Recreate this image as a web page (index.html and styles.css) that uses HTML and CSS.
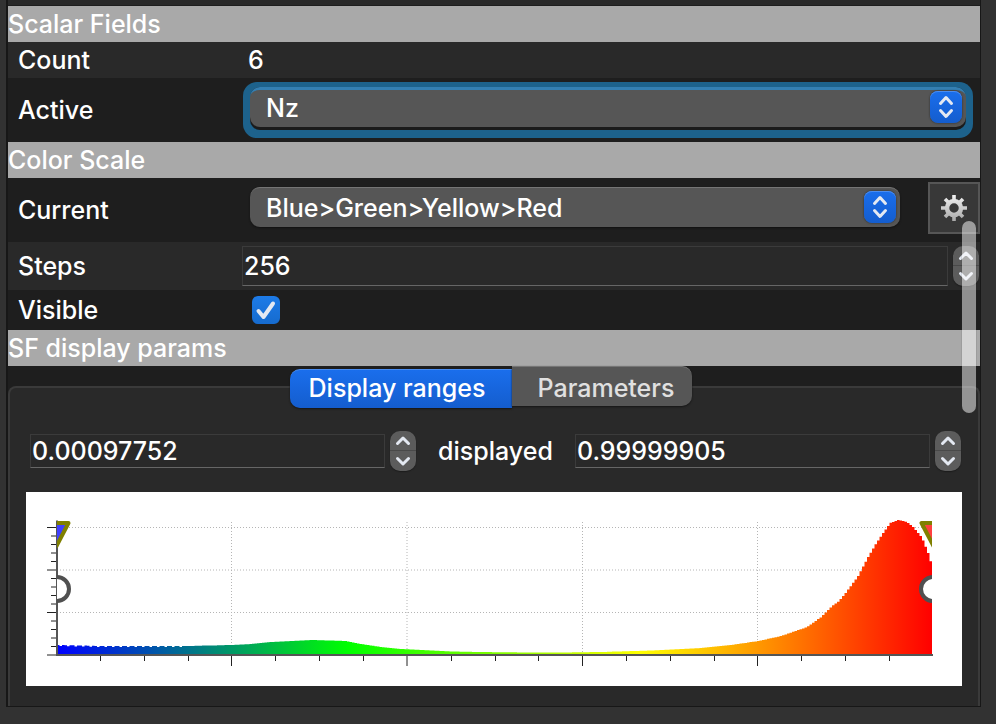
FILE: index.html
```html
<!DOCTYPE html>
<html lang="en">
<head>
<meta charset="utf-8">
<title>Properties</title>
<link rel="stylesheet" href="styles.css">
</head>
<body>
<svg class="defs" aria-hidden="true">
  <symbol id="updown" viewBox="0 0 32 32">
    <path d="M10.500 12.500L16 6.500l5.500 6M10.500 19.500L16 25.500l5.500-6"/>
  </symbol>
  <symbol id="up" viewBox="0 0 26 20">
    <path d="M7.500 12.500L13 7l5.500 5.500"/>
  </symbol>
  <symbol id="down" viewBox="0 0 26 20">
    <path d="M7.500 7.500L13 13l5.500-5.500"/>
  </symbol>
</svg>
<main class="panel">
  <h2 class="section">Scalar Fields</h2>
  <div class="row row-short alt">
    <span class="name">Count</span>
    <div class="value"><span class="text">6</span></div>
  </div>
  <div class="row row-tall">
    <label class="name" for="active">Active</label>
    <div class="value">
      <div class="ring"><div class="ring-inner"><div class="combo">
        <select id="active"><option>Nz</option></select>
        <svg class="badge"><use href="#updown"/></svg>
      </div></div></div>
    </div>
  </div>
  <h2 class="section">Color Scale</h2>
  <div class="row row-tall">
    <label class="name" for="current">Current</label>
    <div class="value scale">
      <div class="combo">
        <select id="current"><option>Blue&gt;Green&gt;Yellow&gt;Red</option></select>
        <svg class="badge"><use href="#updown"/></svg>
      </div>
      <button class="gear" type="button" aria-label="Edit color scale">
        <svg viewBox="0 0 26 26">
          <defs><linearGradient id="metal" gradientUnits="userSpaceOnUse" x1="0" y1="0" x2="0" y2="26"><stop offset="0" stop-color="#f2f2f2"/><stop offset="1" stop-color="#a8a8a8"/></linearGradient></defs>
          <g fill="none" stroke="url(#metal)">
            <circle cx="13" cy="13" r="7" stroke-width="4.500"/>
            <path stroke-width="3.600" d="M13 0l.01 5M13 21l.01 5M0 13l5 .01M21 13l5 .01M4 4l3.500 3.500M18.500 18.500L22 22M22 4l-3.500 3.500M7.500 18.500L4 22"/>
          </g>
        </svg>
      </button>
    </div>
  </div>
  <div class="row row-mid alt">
    <label class="name" for="steps">Steps</label>
    <div class="value spin">
      <input class="field field-tall" id="steps" type="text" value="256">
      <div class="stepper">
        <button type="button" aria-label="Increase steps"><svg><use href="#up"/></svg></button>
        <button type="button" aria-label="Decrease steps"><svg><use href="#down"/></svg></button>
      </div>
    </div>
  </div>
  <div class="row row-check">
    <label class="name" for="visible">Visible</label>
    <div class="value check">
      <input id="visible" type="checkbox" checked>
      <svg class="tick" viewBox="0 0 28 28"><path d="M6.500 15l5 6L21 7.500"/></svg>
    </div>
  </div>
  <h2 class="section">SF display params</h2>
  <section class="params">
    <div class="group">
      <div class="tabs" role="tablist">
        <button class="tab selected" type="button" role="tab" aria-selected="true">Display ranges</button>
        <button class="tab" type="button" role="tab" aria-selected="false">Parameters</button>
      </div>
      <div class="range">
        <div class="spin">
          <input class="field" type="text" value="0.00097752" aria-label="Minimum displayed">
          <div class="stepper">
            <button type="button" aria-label="Increase minimum"><svg><use href="#up"/></svg></button>
            <button type="button" aria-label="Decrease minimum"><svg><use href="#down"/></svg></button>
          </div>
        </div>
        <span>displayed</span>
        <div class="spin">
          <input class="field" type="text" value="0.99999905" aria-label="Maximum displayed">
          <div class="stepper">
            <button type="button" aria-label="Increase maximum"><svg><use href="#up"/></svg></button>
            <button type="button" aria-label="Decrease maximum"><svg><use href="#down"/></svg></button>
          </div>
        </div>
      </div>
      <svg class="chart" viewBox="0 0 936 194" role="img" aria-label="Histogram">
        <defs>
          <linearGradient id="ramp" gradientUnits="userSpaceOnUse" x1="31" y1="0" x2="906" y2="0">
            <stop offset="0" stop-color="#00f"/><stop offset=".333" stop-color="#0f0"/>
            <stop offset=".667" stop-color="#ff0"/><stop offset="1" stop-color="#f00"/>
          </linearGradient>
          <clipPath id="plot"><path d="M31 24h875v140H31z"/></clipPath>
        </defs>
        <path class="grid" d="M31 35.500h875M31 78h875M31 120.500h875M205.500 30v133M381 30v133M556.500 30v133M731.500 30v133"/>
        <path id="bars" fill="url(#ramp)"/>
        <path id="minor" class="axis"/>
        <path class="axis" d="M21 35.500h10M21 78h10M21 120.500h10M21 163h10M205.500 163v11M381 163v11M556.500 163v11M731.500 163v11"/>
        <path class="frame" d="M31 28.500V164M30 163h877"/>
        <g clip-path="url(#plot)">
          <path class="handle" fill="#4040ff" d="M18 31h24.500L30.500 54z"/>
          <path class="handle" fill="#ff4040" d="M895.500 31h24L908 55z"/>
          <circle class="knob" cx="31" cy="97" r="12"/>
          <circle class="knob" cx="907" cy="97" r="12"/>
        </g>
      </svg>
    </div>
  </section>
  <div class="thumb"></div>
</main>
<script src="chart.js"></script>
</body>
</html>
```
FILE: styles.css
```css
* { box-sizing: border-box; }
body {
  margin: 0;
  background: #323232;
  color: #fff;
  font: 500 25px/36px Inter, "Liberation Sans", sans-serif;
}
button, input, select { font: inherit; color: inherit; margin: 0; }
.defs { position: absolute; width: 0; height: 0; }
.panel {
  position: relative;
  margin: 0 15px 17px 6px;
  padding-top: 5px;
  background: #292929;
  border: solid #171717;
  border-width: 0 1px 1px 2px;
}
.section {
  margin: 0;
  height: 36px;
  font-size: 25px;
  font-weight: 500;
  line-height: 36px;
  background: #a9a9a9;
}
.section:first-child { border-top: 1px solid #1e1e1e; height: 37px; }
.row {
  display: grid;
  grid-template-columns: 234px minmax(0, 1fr);
  align-items: center;
  background: #1e1e1e;
}
.alt { background: #292929; }
.row-short { height: 36px; }
.row-tall { height: 64px; }
.row-mid { height: 48px; }
.row-check { height: 40px; }
.name { padding-left: 10px; }
.text { padding-left: 6px; }
.ring {
  margin: 0 7px 0 1px;
  padding: 5px 7px 8px;
  border-radius: 14px;
  background: #1d628c;
}
.ring-inner { padding-bottom: 3px; border-radius: 10px; background: #1b1b1b; }
.combo { position: relative; }
.combo select {
  display: block;
  appearance: none;
  width: 100%;
  height: 40px;
  padding: 0 44px 0 16px;
  border: 0;
  border-top: 1px solid #757575;
  border-radius: 10px;
  background: #565656;
  box-shadow: 0 1px 2px #111;
  outline: 0;
}
.ring .combo select {
  border-top: 3px solid #347fb2;
  padding-bottom: 2px;
  box-shadow: none;
}
.badge {
  position: absolute;
  top: 4px;
  right: 4px;
  width: 32px;
  height: 32px;
  border-radius: 8px;
  background: linear-gradient(#1a6eec, #145dce);
  box-shadow: 0 0 2px #222, inset 0 1px 0 #4b8df0;
  pointer-events: none;
}
.badge, .stepper svg, .tick {
  fill: none;
  stroke: #e4e9f2;
  stroke-width: 3px;
  stroke-linecap: round;
  stroke-linejoin: round;
}
.scale {
  display: flex;
  align-items: center;
  gap: 28px;
  height: 56px;
  padding-left: 8px;
}
.scale .combo { flex: 1; margin-bottom: 6px; }
.gear {
  display: grid;
  place-items: center;
  width: 52px;
  height: 52px;
  margin-bottom: 4px;
  padding: 0;
  border: 2px solid #565656;
  background: #383838;
}
.gear svg { width: 26px; height: 26px; }
.spin { display: flex; align-items: center; gap: 5px; }
.value.spin { padding-right: 1px; }
.field {
  flex: 1;
  min-width: 0;
  width: 100%;
  height: 34px;
  padding: 0 1px;
  border: 1px solid #3b3b3b;
  border-bottom-color: #666;
  border-radius: 0;
  background: #292929;
  outline: 0;
}
.field-tall { height: 40px; }
.stepper {
  flex: none;
  width: 26px;
  height: 40px;
  overflow: hidden;
  border-radius: 10px;
  background: #5c5c5c;
  box-shadow: 0 1px 1px #1c1c1c;
}
.stepper button {
  display: block;
  width: 26px;
  height: 20px;
  padding: 0;
  border: 0;
  background: none;
}
.stepper button:first-child { border-bottom: 1px solid #494949; }
.stepper svg { display: block; width: 26px; height: 20px; }
.check { position: relative; padding-left: 10px; }
.check input {
  display: block;
  appearance: none;
  width: 28px;
  height: 28px;
  border-radius: 6px;
  background: linear-gradient(#1d7be8, #166bce);
}
.tick {
  position: absolute;
  top: 0;
  left: 10px;
  width: 28px;
  height: 28px;
  stroke-width: 4px;
  pointer-events: none;
}
.params { padding-top: 20px; background: #1e1e1e; }
.group {
  padding: 0 16px 20px;
  border: 2px solid #3a3a3a;
  border-bottom: 0;
  border-radius: 8px 8px 0 0;
  background: #292929;
}
.tabs {
  display: flex;
  justify-content: center;
  align-items: flex-start;
  height: 42px;
  margin: -22px 6px 21px 0;
}
.tab {
  width: 180px;
  height: 40px;
  padding: 2px 0 0 8px;
  border: 0;
  border-top: 1px solid #757575;
  border-radius: 0 10px 10px 0;
  background: #565656;
  box-shadow: 0 1px 2px #161616;
  color: #e0e0e0;
}
.tab.selected {
  width: 222px;
  margin-top: 3px;
  height: 39px;
  padding: 0 8px 2px 0;
  border-top-color: #4b8df0;
  border-radius: 10px 0 0 10px;
  background: linear-gradient(#1a6eec, #145dce);
  color: #fff;
}
.range {
  display: flex;
  align-items: center;
  gap: 22px;
  height: 44px;
  margin: 0 1px 19px 4px;
}
.range .spin { flex: 1; min-width: 0; }
.chart { display: block; width: 100%; height: auto; background: #fff; }
.grid { fill: none; stroke: #b5b5b5; stroke-width: 1px; stroke-dasharray: 1 2; }
.axis { fill: none; stroke: #222; stroke-width: 1px; }
.frame { fill: none; stroke: #555; stroke-width: 2px; }
.handle { stroke: #808000; stroke-width: 4px; stroke-linejoin: round; }
.knob { fill: #fff; stroke: #505050; stroke-width: 4px; }
.thumb {
  position: absolute;
  top: 221px;
  right: 4px;
  width: 14px;
  height: 192px;
  border-radius: 7px;
  background: rgba(255, 255, 255, .5);
  box-shadow: 0 0 1px #333;
}
```
FILE: chart.js
```js
// Histogram outline: position along the axis, top of the bar.
const samples = [
  [31, 153], [75, 154], [110, 154], [160, 154], [204, 153], [224, 152], [244, 150],
  [264, 149], [284, 148], [319, 149], [334, 152], [354, 155], [374, 157], [394, 158],
  [424, 159.500], [474, 160.300], [534, 160.500], [574, 160], [624, 158.500], [674, 156],
  [704, 153], [731, 149], [754, 144], [780, 135], [794, 125], [805, 114], [812, 109],
  [820, 99], [831, 84], [841, 65], [848, 53], [856, 41], [863, 31], [871, 28],
  [880, 30], [887, 36], [895, 46], [901, 61], [904, 71], [906, 77]
];
const base = 162;
let path = `M31 ${base}`;
let k = 0;
for (let x = 31, i = 0; x < 906; x += 2.500, i++) {
  while (k < samples.length - 2 && samples[k + 1][0] < x) k++;
  const [x0, y0] = samples[k];
  const [x1, y1] = samples[k + 1];
  let y = y0 + (y1 - y0) * (x - x0) / (x1 - x0);
  if (x < 160 && i % 3 === 1) y += 1;
  path += `V${y.toFixed(1)}H${Math.min(906, x + 2.500)}`;
}
document.getElementById("bars").setAttribute("d", path + `V${base}z`);

let ticks = "";
for (let i = 1; i < 15; i++) if (i % 5) ticks += `M25 ${163 - i * 8.500}h6`;
for (let i = 1; i < 20; i++) if (i % 4) ticks += `M${Math.round(30 + i * 43.850) + 0.500} 163v6`;
document.getElementById("minor").setAttribute("d", ticks);
```
